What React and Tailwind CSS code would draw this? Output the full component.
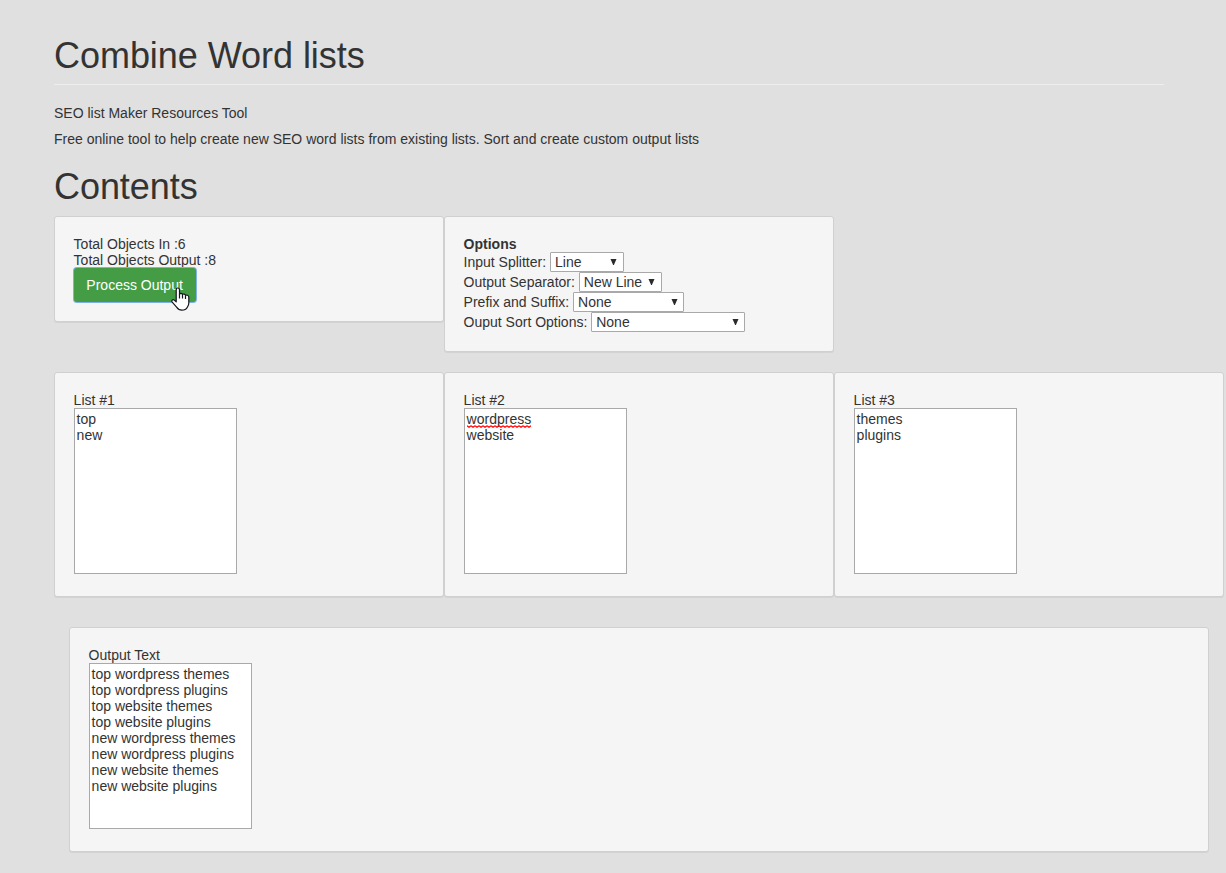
import React from "react";

const cx = (...a) => a.join(" ");

function Panel({ className, children }) {
  return (
    <section
      className={cx(
        "shrink-0 rounded-[3px] border border-[#d0d0d0] bg-[#f5f5f5] p-[19px] pl-[18.6px] shadow-[0_1px_0_#d3d3d3]",
        className
      )}
    >
      {children}
    </section>
  );
}

function Choice({ label, value, width }) {
  return (
    <div className="flex h-5 items-center">
      <span className="whitespace-pre">{label} </span>
      <button
        className={cx(
          "flex h-5 items-center justify-between rounded-[1px] border border-[#a9a9a9] bg-white pr-[5.5px] pl-1",
          width
        )}
      >
        <span>{value}</span>
        <svg width="7" height="6" viewBox="0 0 7 6" className="shrink-0">
          <path d="M0.5 0H6.5L3.9 6H3.1Z" fill="#2b2b2b" />
        </svg>
      </button>
    </div>
  );
}

function TextBox({ label, lines, misspelled }) {
  return (
    <div>
      <div>{label}</div>
      <div className="h-[166px] w-[163px] border border-[#a9a9a9] bg-white px-[2px] py-[2px]">
        {lines.map((line) => (
          <div key={line} className="whitespace-nowrap">
            <span className="relative">
              {line}
              {line === misspelled && (
                <svg className="absolute top-[14px] left-0" width="64" height="3">
                  <defs>
                    <pattern id="wave" width="4" height="3" patternUnits="userSpaceOnUse">
                      <path d="M0 0.7L2 2.3L4 0.7" fill="none" stroke="#f00" strokeWidth="1.2" />
                    </pattern>
                  </defs>
                  <rect width="64" height="3" fill="url(#wave)" />
                </svg>
              )}
            </span>
          </div>
        ))}
      </div>
    </div>
  );
}

function HandCursor() {
  return (
    <svg className="absolute top-[19px] left-[97px]" width="19" height="25" viewBox="0 0 19 25">
      <path
        d="M6.8 1C8 1 8.5 1.9 8.5 3V7.2C9.2 6 11.2 6.2 11.5 7.6C12.2 6.6 14.2 6.9 14.5 8.4C15.4 7.7 17.8 8.1 17.8 10V16C17.8 18 17 19 16.3 20.2C15.2 22.4 13 23.2 10.8 23.2C8.2 23.2 6.8 22 5.6 20.2L1.2 15.2C0.1 13.6 1.7 12.1 3.2 13.1L5.2 14.8V3C5.2 1.9 5.6 1 6.8 1Z"
        fill="#fff"
        stroke="#15151f"
        strokeWidth="1.2"
        strokeLinejoin="round"
      />
      <path d="M8.5 7V11.5M11.5 7.6V11.5M14.5 8.4V12" stroke="#15151f" strokeWidth="1.2" fill="none" />
    </svg>
  );
}

const OUTPUT = [
  "top wordpress themes",
  "top wordpress plugins",
  "top website themes",
  "top website plugins",
  "new wordpress themes",
  "new wordpress plugins",
  "new website themes",
  "new website plugins",
];

export default function App() {
  return (
    <main className="h-[873px] overflow-hidden bg-[#e0e0e0] pl-[54px] font-['Liberation_Sans',Arial,sans-serif] text-[14px] leading-4 text-[#333]">
      <header className="flex h-[85px] w-[1110px] items-end border-b border-[#eeeeee] pb-[8px]">
        <h1 className="text-[36px] leading-[40px] tracking-[-0.04px]">Combine Word lists</h1>
      </header>
      <p className="mt-[18px] leading-5">SEO list Maker Resources Tool</p>
      <p className="mt-[6px] leading-5">
        Free online tool to help create new SEO word lists from existing lists. Sort and create
        custom output lists
      </p>
      <h2 className="mt-[18px] mb-[9px] text-[36px] leading-[40px] tracking-[-0.06px]">Contents</h2>

      <div className="flex h-[156px] items-start">
        <Panel className="h-[106px] w-[390px]">
          <div>Total Objects In :6</div>
          <div>Total Objects Output :8</div>
          <button className="relative flex h-[34px] w-[122px] items-center justify-center rounded-[3px] bg-[#449d44] text-white shadow-[0_0_0_1px_#7fb0ea]">
            Process Output
            <HandCursor />
          </button>
        </Panel>
        <Panel className="h-[136px] w-[390px]">
          <div className="font-bold">Options</div>
          <Choice label="Input Splitter:" value="Line" width="w-[74px]" />
          <Choice label="Output Separator:" value="New Line" width="w-[83px]" />
          <Choice label="Prefix and Suffix:" value="None" width="w-[111px]" />
          <Choice label="Ouput Sort Options:" value="None" width="w-[154px]" />
        </Panel>
      </div>

      <div className="flex">
        <Panel className="h-[225px] w-[390px]">
          <TextBox label="List #1" lines={["top", "new"]} />
        </Panel>
        <Panel className="h-[225px] w-[390px]">
          <TextBox label="List #2" lines={["wordpress", "website"]} misspelled="wordpress" />
        </Panel>
        <Panel className="h-[225px] w-[390px]">
          <TextBox label="List #3" lines={["themes", "plugins"]} />
        </Panel>
      </div>

      <Panel className="mt-[30px] ml-[15px] h-[225px] w-[1140px]">
        <TextBox label="Output Text" lines={OUTPUT} />
      </Panel>
    </main>
  );
}
